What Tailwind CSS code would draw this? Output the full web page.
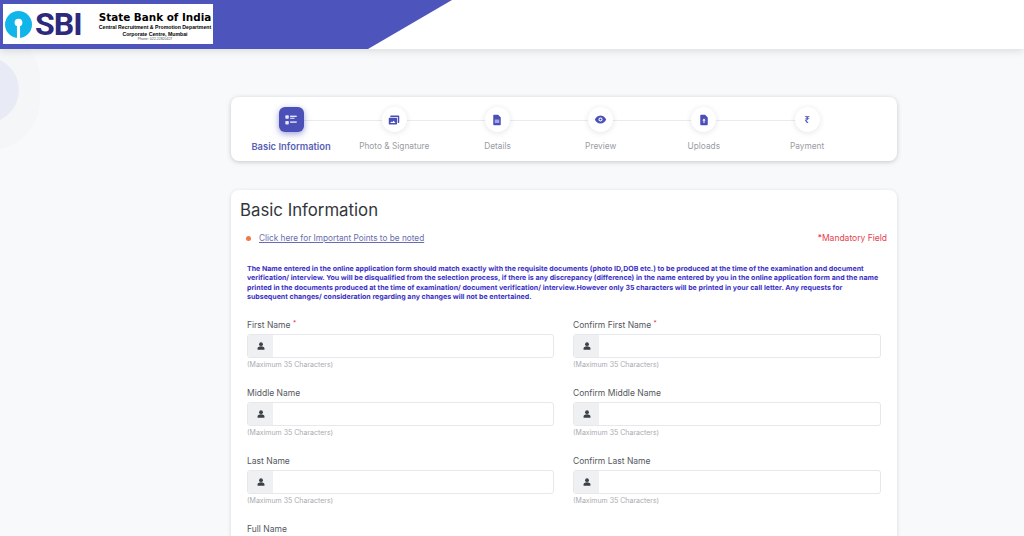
<!DOCTYPE html>
<html lang="en">
<head>
<meta charset="UTF-8">
<title>Basic Information</title>
<script src="https://cdn.jsdelivr.net/npm/@tailwindcss/browser@4"></script>
</head>
<body class="relative h-[536px] w-[1024px] overflow-hidden bg-[#f8f9fb] font-['Inter',sans-serif]">
  <!-- background blob -->
  <div class="absolute left-[-60px] top-[30px] flex h-[120px] w-[100px] items-center justify-center rounded-full bg-[#f5f6f8]">
    <div class="h-[66px] w-[66px] translate-x-[-4px] rounded-full bg-[#e8ebf6]"></div>
  </div>

  <!-- Header -->
  <header class="relative z-10 h-[49px] bg-white shadow-[0_2px_8px_rgba(0,0,0,0.12)]">
    <div class="h-full w-[452px] bg-[#4d55bd] pl-[3px] pt-[4px] [clip-path:polygon(0_0,100%_0,368px_100%,0_100%)]">
      <div class="flex h-[40px] w-[210px] items-center bg-white pl-[2px]">
        <svg viewBox="0 0 28 28" class="h-[27px] w-[27px] shrink-0">
          <circle cx="14" cy="14" r="14" fill="#12b5ea"/>
          <circle cx="14" cy="12" r="4" fill="#fff"/>
          <rect x="12.400" y="13" width="3.200" height="15" fill="#fff"/>
        </svg>
        <span class="ml-[3px] w-[50px] text-[32px] font-bold leading-none tracking-[-1px] text-[#2c2a7c] font-['Roboto',sans-serif]">SBI</span>
        <div class="ml-[13px] flex w-[114px] flex-col items-center pt-[4px] text-black font-['Liberation_Sans',sans-serif]">
          <span class="text-[10.4px] font-bold leading-[12px] whitespace-nowrap font-['DejaVu_Sans',sans-serif]">State Bank of India</span>
          <span class="mt-[1px] text-[5.2px] font-bold leading-[7px] whitespace-nowrap">Central Recruitment &amp; Promotion Department</span>
          <span class="text-[5.2px] font-bold leading-[6px] whitespace-nowrap">Corporate Centre, Mumbai</span>
          <span class="text-[3.5px] leading-[4px] text-gray-600 whitespace-nowrap">Phone: 022-22820427</span>
        </div>
      </div>
    </div>
  </header>

  <main class="relative ml-[231px] mt-[48px] w-[666px]">
    <!-- Stepper -->
    <section class="h-[64px] rounded-lg bg-white px-[8.5px] pt-[10px] shadow-[0_1px_5px_rgba(0,0,0,0.2)]">
      <div class="relative flex">
        <div class="absolute left-[52px] top-[13px] h-px w-[516px] bg-[#e9ebef]"></div>

        <div class="relative flex w-[103.2px] flex-col items-center">
          <div class="flex h-[25px] w-[25px] items-center justify-center rounded-md bg-[#4a50b8] shadow-[0_2px_6px_rgba(74,80,184,0.55)]">
            <svg viewBox="0 0 16 16" class="h-[14px] w-[14px]" fill="#e6e8fa"><rect x="1.500" y="2.500" width="4" height="4" rx="1"/><rect x="1.500" y="9" width="4" height="4" rx="1"/><rect x="7" y="3" width="7.500" height="1.600"/><rect x="7" y="5.400" width="5" height="1.200"/><rect x="7" y="9.600" width="7.500" height="1.600"/></svg>
          </div>
          <span class="mt-[9px] text-[9.4px] font-semibold leading-[12px] whitespace-nowrap text-[#5a5fb5]">Basic Information</span>
        </div>

        <div class="relative flex w-[103.2px] flex-col items-center">
          <div class="flex h-[25px] w-[25px] items-center justify-center rounded-full bg-white shadow-[0_1px_6px_rgba(0,0,0,0.11)]">
            <svg viewBox="0 0 16 16" class="h-[12px] w-[12px]" fill="#4a50b8"><path d="M4 2h10a1 1 0 0 1 1 1v8a1 1 0 0 1-1 1h-1V4H3V3a1 1 0 0 1 1-1z"/><path d="M2 5h9a1 1 0 0 1 1 1v7a1 1 0 0 1-1 1H2a1 1 0 0 1-1-1V6a1 1 0 0 1 1-1zm1 7h7L7.500 9 5.500 11 4.500 10z" fill-rule="evenodd"/></svg>
          </div>
          <span class="mt-[9px] text-[8.3px] leading-[11px] whitespace-nowrap text-[#9a9ca3]">Photo &amp; Signature</span>
        </div>

        <div class="relative flex w-[103.2px] flex-col items-center">
          <div class="flex h-[25px] w-[25px] items-center justify-center rounded-full bg-white shadow-[0_1px_6px_rgba(0,0,0,0.11)]">
            <svg viewBox="0 0 16 16" class="h-[12px] w-[12px]" fill="#4a50b8"><path fill-rule="evenodd" d="M4 1h5.500L13 4.500V14a1 1 0 0 1-1 1H4a1 1 0 0 1-1-1V2a1 1 0 0 1 1-1zm1 6.500V8.700h6V7.500zm0 2.500v1.200h6V10z"/></svg>
          </div>
          <span class="mt-[9px] text-[8.3px] leading-[11px] whitespace-nowrap text-[#9a9ca3]">Details</span>
        </div>

        <div class="relative flex w-[103.2px] flex-col items-center">
          <div class="flex h-[25px] w-[25px] items-center justify-center rounded-full bg-white shadow-[0_1px_6px_rgba(0,0,0,0.11)]">
            <svg viewBox="0 0 16 16" class="h-[13px] w-[13px]" fill="#4a50b8"><path fill-rule="evenodd" d="M8 3c3.500 0 6 2.800 7 5-1 2.200-3.500 5-7 5s-6-2.800-7-5c1-2.200 3.500-5 7-5zm0 2.500a2.500 2.500 0 1 0 0 5 2.500 2.500 0 0 0 0-5z"/><circle cx="8" cy="8" r="1.300"/></svg>
          </div>
          <span class="mt-[9px] text-[8.3px] leading-[11px] whitespace-nowrap text-[#9a9ca3]">Preview</span>
        </div>

        <div class="relative flex w-[103.2px] flex-col items-center">
          <div class="flex h-[25px] w-[25px] items-center justify-center rounded-full bg-white shadow-[0_1px_6px_rgba(0,0,0,0.11)]">
            <svg viewBox="0 0 16 16" class="h-[12px] w-[12px]" fill="#4a50b8"><path fill-rule="evenodd" d="M4 1h5.500L13 4.500V14a1 1 0 0 1-1 1H4a1 1 0 0 1-1-1V2a1 1 0 0 1 1-1zm4 5L5.800 8.800h1.500V12h1.400V8.800h1.500z"/></svg>
          </div>
          <span class="mt-[9px] text-[8.3px] leading-[11px] whitespace-nowrap text-[#9a9ca3]">Uploads</span>
        </div>

        <div class="relative flex w-[103.2px] flex-col items-center">
          <div class="flex h-[25px] w-[25px] items-center justify-center rounded-full bg-white text-[10px] font-semibold text-[#4a50b8] shadow-[0_1px_6px_rgba(0,0,0,0.11)] font-['Noto_Sans',sans-serif]">₹</div>
          <span class="mt-[9px] text-[8.3px] leading-[11px] whitespace-nowrap text-[#9a9ca3]">Payment</span>
        </div>
      </div>
    </section>

    <!-- Form card -->
    <section class="mt-[29px] h-[346px] overflow-hidden rounded-t-lg bg-white px-[9px] pt-[9px] shadow-[0_1px_4px_rgba(0,0,0,0.14)]">
      <h1 class="text-[16.800px] leading-[22px] text-[#33363b]">Basic Information</h1>
      <div class="mt-[12px] flex items-center justify-between pl-[6px] pr-px">
        <div class="flex items-center">
          <span class="h-[5px] w-[5px] rounded-full bg-[#f07a45]"></span>
          <a href="#" class="ml-[8px] text-[8.25px] leading-[11px] text-[#6a6cb0] underline">Click here for Important Points to be noted</a>
        </div>
        <span class="text-[8.5px] leading-[11px] text-[#e4414f]">*Mandatory Field</span>
      </div>

      <p class="mt-[20px] pl-[7px] text-[7.04px] font-bold leading-[9.3px] whitespace-nowrap text-[#3a30c4] [text-rendering:geometricPrecision]">
        <span class="block">The Name entered in the online application form should match exactly with the requisite documents (photo ID,DOB etc.) to be produced at the time of the examination and document</span>
        <span class="block">verification/ interview. You will be disqualified from the selection process, if there is any discrepancy (difference) in the name entered by you in the online application form and the name</span>
        <span class="block">printed in the documents produced at the time of examination/ document verification/ interview.However only 35 characters will be printed in your call letter. Any requests for</span>
        <span class="block">subsequent changes/ consideration regarding any changes will not be entertained.</span>
      </p>

      <div class="mt-[19px] grid grid-cols-[307px_308px] gap-x-[19px] gap-y-[19px] pl-[7px]">
        <div>
          <label class="block text-[8.5px] leading-[11px] text-[#55585e]">First Name <sup class="text-[#e4414f]">*</sup></label>
          <div class="mt-[3px] flex h-[24px] overflow-hidden rounded-[3px] border border-[#e6e8ec] bg-white">
            <div class="flex w-[25px] items-center justify-center bg-[#eef0f2]"><svg viewBox="0 0 16 16" class="h-[10px] w-[10px]" fill="#3c4047"><circle cx="8" cy="5" r="3"/><path d="M2.500 14v-2c0-2 2-3.500 5.500-3.500s5.500 1.500 5.500 3.500v2z"/></svg></div>
          </div>
          <p class="mt-[2px] text-[7px] leading-[9px] text-[#a9abb0]">(Maximum 35 Characters)</p>
        </div>
        <div>
          <label class="block text-[8.5px] leading-[11px] text-[#55585e]">Confirm First Name <sup class="text-[#e4414f]">*</sup></label>
          <div class="mt-[3px] flex h-[24px] overflow-hidden rounded-[3px] border border-[#e6e8ec] bg-white">
            <div class="flex w-[25px] items-center justify-center bg-[#eef0f2]"><svg viewBox="0 0 16 16" class="h-[10px] w-[10px]" fill="#3c4047"><circle cx="8" cy="5" r="3"/><path d="M2.500 14v-2c0-2 2-3.500 5.500-3.500s5.500 1.500 5.500 3.500v2z"/></svg></div>
          </div>
          <p class="mt-[2px] text-[7px] leading-[9px] text-[#a9abb0]">(Maximum 35 Characters)</p>
        </div>
        <div>
          <label class="block text-[8.5px] leading-[11px] text-[#55585e]">Middle Name</label>
          <div class="mt-[3px] flex h-[24px] overflow-hidden rounded-[3px] border border-[#e6e8ec] bg-white">
            <div class="flex w-[25px] items-center justify-center bg-[#eef0f2]"><svg viewBox="0 0 16 16" class="h-[10px] w-[10px]" fill="#3c4047"><circle cx="8" cy="5" r="3"/><path d="M2.500 14v-2c0-2 2-3.500 5.500-3.500s5.500 1.500 5.500 3.500v2z"/></svg></div>
          </div>
          <p class="mt-[2px] text-[7px] leading-[9px] text-[#a9abb0]">(Maximum 35 Characters)</p>
        </div>
        <div>
          <label class="block text-[8.5px] leading-[11px] text-[#55585e]">Confirm Middle Name</label>
          <div class="mt-[3px] flex h-[24px] overflow-hidden rounded-[3px] border border-[#e6e8ec] bg-white">
            <div class="flex w-[25px] items-center justify-center bg-[#eef0f2]"><svg viewBox="0 0 16 16" class="h-[10px] w-[10px]" fill="#3c4047"><circle cx="8" cy="5" r="3"/><path d="M2.500 14v-2c0-2 2-3.500 5.500-3.500s5.500 1.500 5.500 3.500v2z"/></svg></div>
          </div>
          <p class="mt-[2px] text-[7px] leading-[9px] text-[#a9abb0]">(Maximum 35 Characters)</p>
        </div>
        <div>
          <label class="block text-[8.5px] leading-[11px] text-[#55585e]">Last Name</label>
          <div class="mt-[3px] flex h-[24px] overflow-hidden rounded-[3px] border border-[#e6e8ec] bg-white">
            <div class="flex w-[25px] items-center justify-center bg-[#eef0f2]"><svg viewBox="0 0 16 16" class="h-[10px] w-[10px]" fill="#3c4047"><circle cx="8" cy="5" r="3"/><path d="M2.500 14v-2c0-2 2-3.500 5.500-3.500s5.500 1.500 5.500 3.500v2z"/></svg></div>
          </div>
          <p class="mt-[2px] text-[7px] leading-[9px] text-[#a9abb0]">(Maximum 35 Characters)</p>
        </div>
        <div>
          <label class="block text-[8.5px] leading-[11px] text-[#55585e]">Confirm Last Name</label>
          <div class="mt-[3px] flex h-[24px] overflow-hidden rounded-[3px] border border-[#e6e8ec] bg-white">
            <div class="flex w-[25px] items-center justify-center bg-[#eef0f2]"><svg viewBox="0 0 16 16" class="h-[10px] w-[10px]" fill="#3c4047"><circle cx="8" cy="5" r="3"/><path d="M2.500 14v-2c0-2 2-3.500 5.500-3.500s5.500 1.500 5.500 3.500v2z"/></svg></div>
          </div>
          <p class="mt-[2px] text-[7px] leading-[9px] text-[#a9abb0]">(Maximum 35 Characters)</p>
        </div>
        <div>
          <label class="block text-[8.5px] leading-[11px] text-[#55585e]">Full Name</label>
        </div>
      </div>
    </section>
  </main>
</body>
</html>
